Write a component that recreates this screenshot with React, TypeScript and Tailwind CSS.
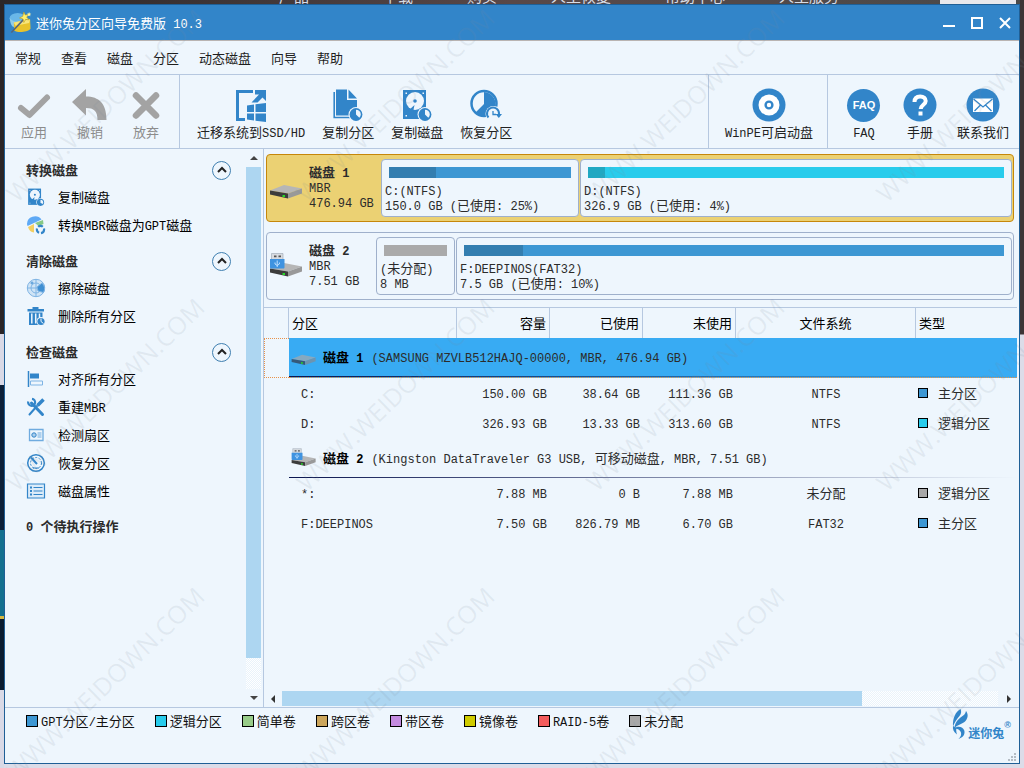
import React from "react";

/* Latin runs are set in a monospaced face one size down from the Chinese text. */
function T({ children }: { children: string }) {
  return (
    <span className="whitespace-pre">
      {children.split(/([\x20-\x7e]+)/).map((run, i) =>
        i % 2 === 1 ? (
          <span key={i} className="font-['Liberation_Mono',monospace] text-[12px] leading-none">
            {run}
          </span>
        ) : (
          run
        ),
      )}
    </span>
  );
}

const BLUE = "#3285c9";

/* ---------- toolbar icons ---------- */

const CheckIcon = () => (
  <svg viewBox="0 0 36 36" className="size-9" fill="none" stroke="#a3a3a3" strokeWidth="6" strokeLinecap="round">
    <path d="M5 21 13.500 28 31 10.500" strokeLinejoin="round" />
  </svg>
);
const UndoIcon = () => (
  <svg viewBox="0 0 36 36" className="size-9" fill="#a3a3a3">
    <path d="M0 15 14 2v7.500c13 0 20.500 7 20.500 23.500h-9C25.500 24 22 21 14 21v7.500z" />
  </svg>
);
const CrossIcon = () => (
  <svg viewBox="0 0 36 36" className="size-9" stroke="#a3a3a3" strokeWidth="6.500" strokeLinecap="round">
    <path d="M8 8.500 28 28.500M28 8.500 8 28.500" />
  </svg>
);
const MigrateIcon = () => (
  <svg viewBox="0 0 32 34" className="h-9 w-8" fill={BLUE}>
    <path d="M1 2h17v3H4v25h6v3H1z" />
    <path d="M20 2h11v11l-3.500-3.500-5 5h-6L24 6.500h-4z" />
    <path d="M12 17.500l7-1v7.500h-7zM20.500 16.300 31 15v9H20.500zM12 25.500h7v7l-7-1zM20.500 25.500H31v8.500l-10.500-1.300z" />
  </svg>
);
const Pie = ({ x, y }: { x: number; y: number }) => (
  <g transform={`translate(${x} ${y})`}>
    <circle r="7.500" fill="#eef6fd" />
    <circle r="6.400" fill={BLUE} />
    <path d="M0 -4.800A4.800 4.800 0 0 1 4.800 0 5 5 0 0 1 3.300 3.300L0 0z" fill="#eef6fd" />
  </g>
);
const CopyPartIcon = () => (
  <svg viewBox="0 0 32 34" className="h-9 w-8" fill={BLUE}>
    <path d="M4 1.500H15V12h10v15.500H4zM16.500 1.500 25 10.500h-8.500z" />
    <path d="M2.200 4v25.500H18" fill="none" stroke={BLUE} strokeWidth="1.600" />
    <Pie x={24} y={26.500} />
  </svg>
);
const CopyDiskIcon = ({ small = false }: { small?: boolean }) => (
  <svg viewBox="0 0 32 34" className={small ? "h-5 w-[18px]" : "h-9 w-8"}>
    <path d="M2 2h23v29H2z" fill={BLUE} />
    <circle cx="14" cy="13" r="9" fill="#eef6fd" />
    <circle cx="14" cy="13" r="1.800" fill={BLUE} />
    <path d="M13.500 17 7 23l5 1z" fill={BLUE} />
    <path d="M4.500 4.500h1.500V6H4.500zM21.500 4.500H23V6h-1.500zM4.500 27H6v1.500H4.500z" fill="#eef6fd" />
    <Pie x={24} y={26.500} />
  </svg>
);
const RecoverIcon = () => (
  <svg viewBox="0 0 32 34" className="h-9 w-8">
    <circle cx="14" cy="15.500" r="12.500" fill="none" stroke={BLUE} strokeWidth="2.500" />
    <path d="M14 4v12l-8.500 8.500A12 12 0 0 0 24 22 12 12 0 0 0 14 4z" fill={BLUE} />
    <circle cx="23.500" cy="26" r="8" fill="#eef6fd" />
    <path d="M18.500 29.500A6 6 0 1 1 29 26" fill="none" stroke={BLUE} strokeWidth="2" />
    <path d="M25.500 26H32l-3.200 4z" fill={BLUE} />
    <path d="M23 23v3.500h3" fill="none" stroke={BLUE} strokeWidth="1.300" />
  </svg>
);
const DiscIcon = () => (
  <svg viewBox="0 0 36 36" className="size-9">
    <circle cx="18" cy="18" r="16.500" fill={BLUE} />
    <circle cx="18" cy="18" r="10.500" fill="#fff" />
    <circle cx="18" cy="18" r="3.400" fill="none" stroke={BLUE} strokeWidth="2.400" />
  </svg>
);
const FaqIcon = () => (
  <span aria-hidden className="flex h-9 items-center">
    <span className="flex size-[33px] items-center justify-center rounded-full bg-[#3285c9] font-['Liberation_Sans',sans-serif] text-[11px] font-bold text-white">
      FAQ
    </span>
  </span>
);
const HelpIcon = () => (
  <svg viewBox="0 0 36 36" className="size-9">
    <circle cx="18" cy="18" r="16.500" fill={BLUE} />
    <path d="M12.500 15c0-4 2.500-5.500 5.700-5.500 3.500 0 5.500 2 5.500 4.600 0 3.700-5 3.700-5 8" fill="none" stroke="#fff" strokeWidth="4" />
    <path d="M16.500 24.500h4v4h-4z" fill="#fff" />
  </svg>
);
const MailIcon = () => (
  <svg viewBox="0 0 36 36" className="size-9">
    <circle cx="18" cy="18" r="16.500" fill={BLUE} />
    <path d="M8 11.500h20v13.500H8z" fill="#fff" />
    <path d="m8.500 12 9.500 8 9.500-8M9.500 24l6-6M26.500 24l-6-6" fill="none" stroke={BLUE} strokeWidth="1.300" />
  </svg>
);

/* ---------- sidebar icons ---------- */

const ConvertIcon = () => (
  <svg viewBox="0 0 20 20" className="size-5">
    <path d="M1 9a8 7.500 0 0 1 14.500-4.500L1.500 11z" fill="#5ea9f5" />
    <path d="m2 12 6-3v8.500C5 17.500 3 15 2 12z" fill="#f3cf62" />
    <path d="m9 8 8-3 .5 4-5 2z" fill="#86c986" />
    <circle cx="14.500" cy="14.500" r="3.600" fill="none" stroke={BLUE} strokeWidth="2.200" strokeDasharray="5 2" />
  </svg>
);
const EraseIcon = () => (
  <svg viewBox="0 0 20 20" className="size-5" fill="none" stroke="#7fb4e4">
    <circle cx="10" cy="10" r="8.700" fill="#cfe4f6" />
    <circle cx="10" cy="10" r="5" />
    <path d="M10 1v18M1 10h18" />
    <path d="m11 9 5-4a8 8 0 0 1 1.500 9.500L12 13z" fill="#3f8fd2" />
    <path d="M5 4h2v2H5z" fill={BLUE} />
  </svg>
);
const TrashIcon = () => (
  <svg viewBox="0 0 20 20" className="size-5" fill={BLUE}>
    <path d="M6.500 1h6v2H18v2.500H1.500V3h5zM3 6.500h13.500V19H3z" />
    <path d="M5.800 7.500v10M9.700 7.500v10M13.500 7.500V13" stroke="#eef6fd" strokeWidth="1.500" />
    <circle cx="15" cy="15.500" r="4.500" fill="#eef6fd" />
    <circle cx="15" cy="15.500" r="3.600" />
    <path d="M15 12.500v3l2.500 2" stroke="#eef6fd" strokeWidth="1" fill="none" />
  </svg>
);
const AlignIcon = () => (
  <svg viewBox="0 0 20 20" className="size-5">
    <path d="M2.500 2v16" stroke={BLUE} strokeWidth="1.500" />
    <path d="M4 4.500h9v5H4z" fill={BLUE} />
    <path d="M4.500 12h12v4h-12z" fill="#eef6fd" stroke="#7fb4e4" />
  </svg>
);
const ToolsIcon = () => (
  <svg viewBox="0 0 20 20" className="size-5" fill="none" stroke={BLUE}>
    <path d="m5.500 6 11 11.500" strokeWidth="3" strokeLinecap="round" />
    <path d="M2.200 4.500A3.500 3.500 0 1 0 6 1.800" strokeWidth="2.200" />
    <path d="m17.500 2.500-6 6" strokeWidth="3.500" />
    <path d="m11 9-7.500 8.500" strokeWidth="2" strokeLinecap="round" />
  </svg>
);
const SectorIcon = () => (
  <svg viewBox="0 0 20 20" className="size-5" fill="none" stroke="#6fabdf">
    <path d="M3.500 4.500h13.500v11h-13.500z" strokeWidth="1.300" />
    <circle cx="8" cy="10" r="2.200" fill="#a9cdec" stroke={BLUE} />
    <path d="M11.500 8h4M11.500 10h4M11.500 12h4" />
  </svg>
);
const GaugeIcon = () => (
  <svg viewBox="0 0 20 20" className="size-5" fill="none" stroke={BLUE}>
    <circle cx="10" cy="10" r="8.300" strokeWidth="1.500" />
    <circle cx="10" cy="10" r="5.500" strokeDasharray="2 1.500" />
    <path d="M5 4.500 11 11" strokeWidth="2" />
    <path d="M7 15h6" />
  </svg>
);
const ListIcon = () => (
  <svg viewBox="0 0 20 20" className="size-5" fill="none" stroke={BLUE}>
    <path d="M1.500 3h17v14h-17z" fill="#dcecf9" strokeWidth="1.200" />
    <path d="M4 6.500h2M4 10h2M4 13.500h2" strokeWidth="2" />
    <path d="M7.500 6.500h9M7.500 10h9M7.500 13.500h9" />
  </svg>
);

/* ---------- disk pictures ---------- */

const DriveShape = ({ tint = false }: { tint?: boolean }) => (
  <>
    <path d="M0 18.500 14 13 32 16.500 18 21.500z" fill={tint ? "#86a9c0" : "#b6b6b6"} />
    <path d="M0 18.500 18 21.500V26.500L0 22.500z" fill={tint ? "#35597a" : "#3c3c3c"} />
    <path d="M18 21.500 32 16.500v5L18 26.500z" fill={tint ? "#6d94b0" : "#999"} />
    <path d="M12.500 23h2.500v2h-2.500z" fill="#27d827" />
  </>
);
const DriveIcon = ({ small = false }: { small?: boolean }) => (
  <svg viewBox="0 0 33 32" className={small ? "h-6 w-[26px]" : "h-8 w-[33px]"}>
    <DriveShape tint={small} />
  </svg>
);
const UsbIcon = ({ small = false }: { small?: boolean }) => (
  <svg viewBox="0 0 33 32" className={small ? "h-6 w-[26px]" : "h-8 w-[33px]"}>
    <DriveShape />
    <path d="M1.500 3.500H13V10H1.500z" fill="#d7dbe0" stroke="#9aa5b0" strokeWidth=".6" />
    <path d="M4 5.500h2.500v1.800H4zM8.500 5.500H11v1.800H8.500z" fill="#555" />
    <path d="M0 9h14.500v8.500c0 .5-.5 1-1 1H1c-.5 0-1-.5-1-1z" fill="#3f93e0" />
    <path d="M7.200 10.500V17M5 12.500V14l2.200 1.500L9.400 14v-1.500" stroke="#bfe0ff" fill="none" />
  </svg>
);

const AppIcon = () => (
  <svg viewBox="0 0 24 24" className="size-[23px]">
    <ellipse cx="9" cy="7.500" rx="8.500" ry="5.500" fill="#69b7e8" />
    <path d="M1 7.500c3 4 9 5 14 2l-2 8-9-1c-2-2-3-5-3-9z" fill="#8fcbe8" />
    <path d="M5 12 22 8.500l.5 10c-3 3.500-13 4.500-17 2z" fill="#e9c32a" />
    <path d="m5 12 17-3.500-1 4-14 3z" fill="#f8e579" />
    <path d="M2.500 22.500 15 9" stroke="#56657a" strokeWidth="1.600" />
    <path d="m15.500 1 1.500 3.200 3.500-.7-2 3 2.500 2.700-3.700-.4L15.500 12 14.700 8.300 11 7.300l3.300-1.700z" fill="#ffef6c" stroke="#b89a1d" strokeWidth=".6" />
    <path d="m21 1 .6 1.600 1.600.2-1.200 1 .3 1.700L21 4.600l-1.500.9.4-1.700-1.200-1 1.600-.2z" fill="#fff3a0" />
  </svg>
);

const LogoMark = () => (
  <svg viewBox="0 0 16 32" className="h-8 w-4" fill={BLUE}>
    <path d="M8.500 1C3.500 4 .5 10 1 18.500c1.500-4.500 4-7.500 6.500-10.500C9.500 5.500 9.500 3 8.500 1z" />
    <path d="M14 3c2.500 3 2 7-.5 10-2.500 2.500-7.500 3.500-11 7 .5-5.500 3-8 6-10.500C11.500 7.500 13.500 6 14 3z" />
    <path d="M2 20.500c3.500-3 9-2 10.300 2 1 4-1.300 7-5.800 8.500 2.500-2.500 3.200-4.500 2.300-7-1-2.500-3.800-3.500-6.800-3.500z" />
    <path d="M1 18c-.5 3 .5 6 4 8.500C4.200 24 4 21.500 4.500 20z" />
  </svg>
);

/* ---------- toolbar ---------- */

function Tool({ icon, label, disabled = false, wide = false }: { icon: React.ReactNode; label: string; disabled?: boolean; wide?: boolean }) {
  return (
    <button
      type="button"
      disabled={disabled}
      className={`flex shrink-0 flex-col items-center pt-3 leading-[18px] ${wide ? "w-14" : ""} ${disabled ? "text-[#8c8c8c]" : "text-[#222]"}`}
    >
      {icon}
      <T>{label}</T>
    </button>
  );
}

/* ---------- sidebar ---------- */

const groups = [
  {
    title: "转换磁盘",
    items: [
      { icon: <CopyDiskIcon small />, label: "复制磁盘" },
      { icon: <ConvertIcon />, label: "转换MBR磁盘为GPT磁盘" },
    ],
  },
  {
    title: "清除磁盘",
    items: [
      { icon: <EraseIcon />, label: "擦除磁盘" },
      { icon: <TrashIcon />, label: "删除所有分区" },
    ],
  },
  {
    title: "检查磁盘",
    items: [
      { icon: <AlignIcon />, label: "对齐所有分区" },
      { icon: <ToolsIcon />, label: "重建MBR" },
      { icon: <SectorIcon />, label: "检测扇区" },
      { icon: <GaugeIcon />, label: "恢复分区" },
      { icon: <ListIcon />, label: "磁盘属性" },
    ],
  },
];

const track =
  "bg-[repeating-conic-gradient(#ffffff_0_25%,#e9f3fb_0_50%)] bg-[length:2px_2px]";

function Sidebar() {
  return (
    <aside className="flex w-[259px] shrink-0 border-r border-[#b6c8e0]">
      <nav className="flex flex-1 flex-col gap-[9px] pt-2 pr-[15px] pl-[21px]">
        {groups.map((g) => (
          <section key={g.title}>
            <div className="flex h-[26px] items-center justify-between">
              <h2 className="font-bold text-[#2b2b2b]">{g.title}</h2>
              <button
                type="button"
                aria-label={g.title}
                className="flex size-[19px] items-center justify-center rounded-full border border-[#3f7fb0]"
              >
                <svg viewBox="0 0 10 8" className="h-2 w-[10px]" fill="none" stroke="#222" strokeWidth="2">
                  <path d="m1 6 4-4 4 4" />
                </svg>
              </button>
            </div>
            <ul>
              {g.items.map((it) => (
                <li key={it.label}>
                  <a href="#" className="flex h-7 items-center gap-3 text-black">
                    <span className="flex w-5 justify-center">{it.icon}</span>
                    <T>{it.label}</T>
                  </a>
                </li>
              ))}
            </ul>
          </section>
        ))}
        <p className="pt-0.5 font-bold text-[#2b2b2b]">
          <T>0 个待执行操作</T>
        </p>
      </nav>
      <div className="mr-0.5 flex w-[15px] flex-col">
        <button type="button" aria-label="向上滚动" className="flex h-[18px] items-center justify-center">
          <svg viewBox="0 0 8 4" className="h-1 w-2" fill="#444"><path d="M0 4 4 0l4 4z" /></svg>
        </button>
        <div className={`flex-1 ${track}`}>
          <div className="h-[94%] bg-[#add6f1]" />
        </div>
        <button type="button" aria-label="向下滚动" className="flex h-[18px] items-center justify-center">
          <svg viewBox="0 0 8 4" className="h-1 w-2" fill="#444"><path d="M0 0h8L4 4z" /></svg>
        </button>
      </div>
    </aside>
  );
}

/* ---------- disk map ---------- */

interface Part {
  name: string;
  size: string;
  used: number;
  bar: string;
  fill: string;
  box: string;
}

const line = "h-[15px] leading-[15px]";

function DiskCard({ name, size, icon, parts, selected = false }: { name: string; size: string; icon: React.ReactNode; parts: Part[]; selected?: boolean }) {
  return (
    <div
      className={`flex rounded-[4px] border py-1 pr-px text-[#2b2b2b] ${
        selected ? "border-[#c6870a] bg-[#ebd173]" : "border-[#9fb0cb]"
      }`}
    >
      <div className={`flex shrink-0 items-center gap-[6px] pl-[3px] ${selected ? "w-[114px]" : "w-[109px]"}`}>
        {icon}
        <div className="pb-1">
          <div className={`font-bold ${line}`}><T>{name}</T></div>
          <div className={line}><T>MBR</T></div>
          <div className={line}><T>{size}</T></div>
        </div>
      </div>
      <div className="flex min-w-0 flex-1 gap-px">
        {parts.map((p) => (
          <div key={p.name} className={`min-w-0 rounded-[4px] border border-[#9fb0cb] bg-[#eef6fd] pt-[7px] pb-1 ${p.box}`}>
            <div className={`mx-[7px] mb-1 h-[11px] ${p.bar}`}>
              <div className={`h-full ${p.fill}`} style={{ width: `${p.used}%` }} />
            </div>
            <div className={`pl-[3px] ${line}`}><T>{p.name}</T></div>
            <div className={`pl-[3px] ${line}`}><T>{p.size}</T></div>
          </div>
        ))}
      </div>
    </div>
  );
}

/* ---------- partition table ---------- */

function DiskRow({ icon, name, info, selected = false }: { icon: React.ReactNode; name: string; info: string; selected?: boolean }) {
  return (
    <tr className="h-10">
      <td className={selected ? "border-y border-l border-dotted border-[#e8924a] p-0" : "p-0"} />
      <td colSpan={6} className={`p-0 ${selected ? "border-b border-dotted border-[#e8924a] bg-[#38abf3]" : ""}`}>
        <div className="flex h-[38px] items-center gap-[6px] pl-0.5">
          {icon}
          <span>
            <b className="mr-2 text-black"><T>{name}</T></b>
            <T>{info}</T>
          </span>
        </div>
        <div className="h-px bg-linear-to-r from-[#0a1550] to-transparent" />
      </td>
    </tr>
  );
}

function PartRow({ cells, color }: { cells: string[]; color: string }) {
  return (
    <tr className="h-[30px]">
      <td className="p-0" />
      <td className="p-0 pl-3"><T>{cells[0]}</T></td>
      <td className="p-0 pr-[3px] text-right"><T>{cells[1]}</T></td>
      <td className="p-0 pr-[3px] text-right"><T>{cells[2]}</T></td>
      <td className="p-0 pr-[3px] text-right"><T>{cells[3]}</T></td>
      <td className="p-0 text-center"><T>{cells[4]}</T></td>
      <td className="p-0 pl-0.5">
        <div className="flex items-center gap-[10px]">
          <span className={`size-[10px] border border-black ${color}`} />
          {cells[5]}
        </div>
      </td>
    </tr>
  );
}

const legend = [
  ["bg-[#3d97d3]", "GPT分区/主分区"],
  ["bg-[#28ccec]", "逻辑分区"],
  ["bg-[#98cc88]", "简单卷"],
  ["bg-[#cca65c]", "跨区卷"],
  ["bg-[#c48be0]", "带区卷"],
  ["bg-[#d0cc00]", "镜像卷"],
  ["bg-[#f35c5c]", "RAID-5卷"],
  ["bg-[#a8a8a8]", "未分配"],
];

const th = "border-r border-[#b6c8e0] p-0 font-normal";

export default function App() {
  return (
    <div className="relative flex min-h-screen flex-col overflow-hidden bg-[linear-gradient(to_bottom,#3d3435_0_334px,#dcdce8_335px)] pr-1 pb-1 font-['Noto_Sans_CJK_SC',sans-serif] text-[13px] leading-5">
      {/* desktop visible round the window */}
      <div aria-hidden className="absolute inset-y-0 left-0 w-1 bg-[linear-gradient(to_bottom,#2b2526_0_334px,#d9d9e6_334px_385px,#0d2038_385px_530px,#14708f_530px_616px,#d7b840_616px_619px,#0a1c30_619px_690px,#d9d9e6_690px)]" />
      <div aria-hidden className="relative h-1 shrink-0 overflow-hidden bg-linear-to-r from-[#2b2728] via-[#594848] to-[#4a4a4a]">
        <div className="absolute bottom-0 left-[279px] flex gap-[54px] text-[15px] leading-4 whitespace-nowrap text-[#d8dce6]">
          <span className="w-[50px]">产品</span>
          <span>下载</span>
          <span>购买</span>
          <span>人工恢复</span>
          <span>帮助中心</span>
          <span>人工服务</span>
        </div>
        <div className="absolute right-1 bottom-0 h-1 w-[76px] bg-[#e8e8ec]" />
      </div>

      <div className="relative ml-1 flex flex-1 flex-col border border-[#1f5f96] bg-[#eef6fd]">
        <header className="flex h-9 items-center border-b border-[#b9b4b2] bg-[#3285c9] pl-1 text-white">
          <AppIcon />
          <h1 className="ml-1 flex-1"><T>迷你兔分区向导免费版 10.3</T></h1>
          <div className="flex items-center gap-4 pr-2">
            <button type="button" aria-label="最小化" className="flex size-3 items-end pb-0.5"><span className="h-0.5 w-3 bg-white" /></button>
            <button type="button" aria-label="最大化" className="size-3 border-2 border-white" />
            <button type="button" aria-label="关闭" className="size-3">
              <svg viewBox="0 0 12 12" className="size-3" stroke="#fff" strokeWidth="2"><path d="m1 1 10 10M11 1 1 11" /></svg>
            </button>
          </div>
        </header>

        <nav className="flex h-[34px] items-center gap-5 border-b border-[#b6c8e0] pl-[10px] text-[#1e1e1e]">
          {["常规", "查看", "磁盘", "分区", "动态磁盘", "向导", "帮助"].map((m) => (
            <button key={m} type="button">{m}</button>
          ))}
        </nav>

        <div className="flex h-[74px] border-b border-[#b6c8e0]">
          <div className="flex border-r border-[#b6c8e0] pr-[5px] pl-px">
            <Tool wide disabled icon={<CheckIcon />} label="应用" />
            <Tool wide disabled icon={<UndoIcon />} label="撤销" />
            <Tool wide disabled icon={<CrossIcon />} label="放弃" />
          </div>
          <div className="flex flex-1 gap-[17px] pl-[17px]">
            <Tool icon={<MigrateIcon />} label="迁移系统到SSD/HD" />
            <Tool icon={<CopyPartIcon />} label="复制分区" />
            <Tool icon={<CopyDiskIcon />} label="复制磁盘" />
            <Tool icon={<RecoverIcon />} label="恢复分区" />
          </div>
          <div className="flex border-x border-[#b6c8e0] pr-[14px] pl-4">
            <Tool icon={<DiscIcon />} label="WinPE可启动盘" />
          </div>
          <div className="flex pr-[10px] pl-2">
            <Tool wide icon={<FaqIcon />} label="FAQ" />
            <Tool wide icon={<HelpIcon />} label="手册" />
            <div className="pl-[9px]">
              <Tool icon={<MailIcon />} label="联系我们" />
            </div>
          </div>
        </div>

        <div className="flex flex-1">
          <Sidebar />
          <main className="flex min-w-0 flex-1 flex-col">
            <div className="flex flex-col gap-[10px] px-[5px] pt-[5px] pb-[7px] pl-0.5">
              <DiskCard
                selected
                name="磁盘 1"
                size="476.94 GB"
                icon={<DriveIcon />}
                parts={[
                  { name: "C:(NTFS)", size: "150.0 GB (已使用: 25%)", used: 26, bar: "bg-[#3d97d3]", fill: "bg-[#337eb0]", box: "basis-[198px] grow" },
                  { name: "D:(NTFS)", size: "326.9 GB (已使用: 4%)", used: 4, bar: "bg-[#28ccec]", fill: "bg-[#20a8c2]", box: "basis-[432px] grow-[2]" },
                ]}
              />
              <DiskCard
                name="磁盘 2"
                size="7.51 GB"
                icon={<UsbIcon />}
                parts={[
                  { name: "(未分配)", size: "8 MB", used: 0, bar: "bg-[#aaaaaa]", fill: "bg-[#888]", box: "w-[79px] shrink-0" },
                  { name: "F:DEEPINOS(FAT32)", size: "7.5 GB (已使用: 10%)", used: 11, bar: "bg-[#3d97d3]", fill: "bg-[#337eb0]", box: "flex-1" },
                ]}
              />
            </div>

            <div className="flex-1 pr-0.5">
              <table className="w-full table-fixed border-separate border-spacing-0 border-t border-[#b6c8e0] text-[#2b2b2b]">
                <colgroup>
                  <col className="w-[25px]" />
                  <col className="w-[168px]" />
                  <col className="w-[93px]" />
                  <col className="w-[93px]" />
                  <col className="w-[93px]" />
                  <col className="w-[180px]" />
                  <col />
                </colgroup>
                <thead>
                  <tr className="h-[30px] text-black">
                    <td className={th} />
                    <th className={`${th} pl-[3px] text-left`}>分区</th>
                    <th className={`${th} pr-[3px] text-right`}>容量</th>
                    <th className={`${th} pr-[3px] text-right`}>已使用</th>
                    <th className={`${th} pr-[3px] text-right`}>未使用</th>
                    <th className={`${th} text-center`}>文件系统</th>
                    <th className="p-0 pl-[3px] text-left font-normal">类型</th>
                  </tr>
                </thead>
                <tbody>
                  <DiskRow selected icon={<DriveIcon small />} name="磁盘 1" info="(SAMSUNG MZVLB512HAJQ-00000, MBR, 476.94 GB)" />
                  <PartRow cells={["C:", "150.00 GB", "38.64 GB", "111.36 GB", "NTFS", "主分区"]} color="bg-[#3d97d3]" />
                  <PartRow cells={["D:", "326.93 GB", "13.33 GB", "313.60 GB", "NTFS", "逻辑分区"]} color="bg-[#28ccec]" />
                  <DiskRow icon={<UsbIcon small />} name="磁盘 2" info="(Kingston DataTraveler G3 USB, 可移动磁盘, MBR, 7.51 GB)" />
                  <PartRow cells={["*:", "7.88 MB", "0 B", "7.88 MB", "未分配", "逻辑分区"]} color="bg-[#a8a8a8]" />
                  <PartRow cells={["F:DEEPINOS", "7.50 GB", "826.79 MB", "6.70 GB", "FAT32", "主分区"]} color="bg-[#3d97d3]" />
                </tbody>
              </table>
            </div>

            <div className="mb-px flex h-[15px]">
              <button type="button" aria-label="向左滚动" className="flex w-[18px] items-center justify-center">
                <svg viewBox="0 0 4 8" className="h-2 w-1" fill="#333"><path d="M4 0v8L0 4z" /></svg>
              </button>
              <div className={`flex-1 ${track}`}>
                <div className="h-full w-[81%] bg-[#add6f1]" />
              </div>
              <button type="button" aria-label="向右滚动" className="flex w-[21px] items-center justify-center">
                <svg viewBox="0 0 4 8" className="h-2 w-1" fill="#333"><path d="M0 0v8l4-4z" /></svg>
              </button>
            </div>
          </main>
        </div>

        <footer className="flex h-14 justify-between border-t border-[#b6c8e0] pl-[21px] text-[#111]">
          <ul className="flex gap-5 pt-[3px]">
            {legend.map(([color, label]) => (
              <li key={label} className="flex h-5 items-center gap-[3px]">
                <span className={`size-3 border border-black ${color}`} />
                <T>{label}</T>
              </li>
            ))}
          </ul>
          <div className="flex flex-col items-end">
            <div className="flex items-start pr-2 text-[#3285c9]">
              <LogoMark />
              <span className="pt-4 text-[12px] leading-[18px] font-bold">迷你兔</span>
              <span className="pt-2.5 font-['Liberation_Sans',sans-serif] text-[9px] leading-[14px] font-bold">®</span>
            </div>
            <svg viewBox="0 0 8 8" className="mt-auto mr-[3px] mb-0.5 size-2" fill="#b4bcc4">
              <path d="M6 0h2v2H6zM3 3h2v2H3zM6 3h2v2H6zM0 6h2v2H0zM3 6h2v2H3zM6 6h2v2H6z" />
            </svg>
          </div>
        </footer>
      </div>

      {/* repeated diagonal watermark */}
      <div aria-hidden className="pointer-events-none absolute -top-10 -left-10 grid grid-cols-[repeat(4,290px)] auto-rows-[289px]">
        {Array.from({ length: 12 }, (_, i) => (
          <div key={i} className="flex items-center justify-center">
            <span className="-rotate-[44deg] font-['Open_Sans',sans-serif] text-[25px] whitespace-nowrap text-[#7a8a9a]/12">WWW.WEIDOWN.COM</span>
          </div>
        ))}
      </div>
    </div>
  );
}
